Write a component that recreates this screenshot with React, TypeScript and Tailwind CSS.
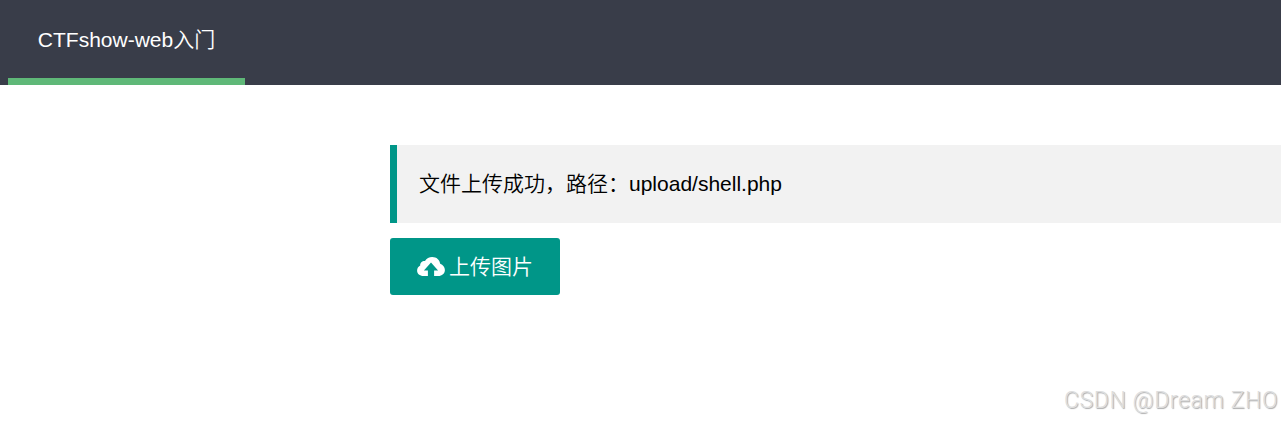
import React from "react";

function UploadIcon() {
  return (
    <svg viewBox="0 0 28 20" className="h-5 w-7 shrink-0" aria-hidden="true">
      <path
        fill="#ffffff"
        d="M6.6 19.1C2.6 19.1 0.1 16.8 0.1 13.6C0.1 11.4 1.3 9.5 3.2 8.5C3 5.8 5.2 3.8 8 4C9.5 1.6 12.2 0 15.2 0C19.6 0 22.7 2.9 23.2 6.8C26 7.8 27.9 10.3 27.9 13.1C27.9 16.6 25 19.1 21.3 19.1H17.1V13.6H21.1L14 5.6L6.9 13.6H10.9V19.1Z"
      />
    </svg>
  );
}

export default function App() {
  return (
    <div className="relative h-[422px] w-full overflow-hidden bg-white font-['Liberation_Sans','Noto_Sans_CJK_SC',sans-serif] text-[21px] text-black">
      <nav className="flex h-[85px] bg-[#393d49] pl-2">
        <a className="flex h-full w-[237px] justify-center border-b-7 border-[#5fb878] leading-[79px] whitespace-nowrap text-white">
          <span>CTFshow-web<span className="font-[350]">入门</span></span>
        </a>
      </nav>
      <main className="ml-[390px] pt-[60px]">
        <blockquote className="h-[78px] border-l-7 border-[#009688] bg-[#f2f2f2] pl-[22px] leading-[78px] font-[350] whitespace-nowrap">
          文件上传成功，路径：upload/shell.php
        </blockquote>
        <button className="mt-[15px] flex h-[57px] w-[170px] items-center gap-1 rounded-[3px] bg-[#009688] pl-[27px] whitespace-nowrap text-white">
          <UploadIcon />
          <span className="font-[350]">上传图片</span>
        </button>
      </main>
      <div className="absolute top-[385px] left-[1064px] font-['Roboto','Liberation_Sans',sans-serif] text-[23px] leading-8 font-light tracking-[0.6px] whitespace-nowrap text-[#dedede] [text-shadow:1px_1px_1px_#aaa]">
        CSDN @Dream ZHO
      </div>
    </div>
  );
}
